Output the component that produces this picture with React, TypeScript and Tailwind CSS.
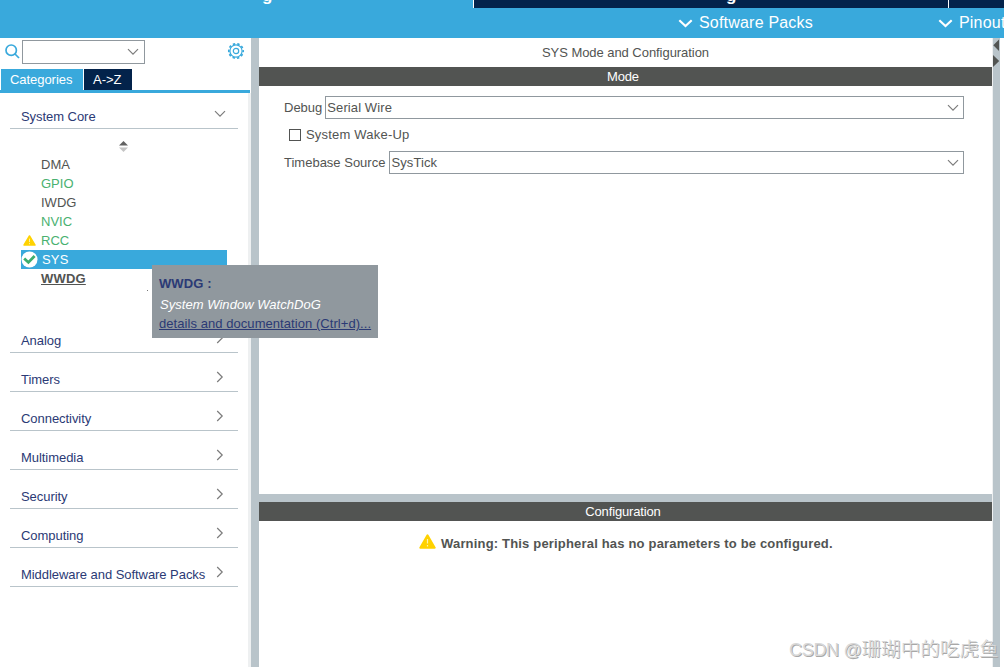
import React from "react";

function Chevron({ dir = "down", className = "" }: { dir?: "down" | "right"; className?: string }) {
  return dir === "down" ? (
    <svg className={className} width="12" height="8" viewBox="0 0 12 8" fill="none" stroke="#7c7c7c" strokeWidth="1.2">
      <path d="M1 1.2 L6 6.2 L11 1.2" />
    </svg>
  ) : (
    <svg className={className} width="8" height="12" viewBox="0 0 8 12" fill="none" stroke="#7c7c7c" strokeWidth="1.2">
      <path d="M1.2 1 L6.2 6 L1.2 11" />
    </svg>
  );
}

function WarningIcon({ width, height }: { width: number; height: number }) {
  return (
    <svg width={width} height={height} viewBox="0 0 17 15" preserveAspectRatio="none">
      <path d="M8.5 1.3 L15.7 13.7 H1.3 Z" fill="#ffd200" stroke="#ffd200" strokeWidth="2" strokeLinejoin="round" />
      <path d="M8.5 5 V9.6 M8.5 11 V12.6" stroke="#fff3b0" strokeWidth="1.2" />
    </svg>
  );
}

function GearIcon() {
  return (
    <svg width="18" height="18" viewBox="0 0 18 18" fill="none" stroke="#39a9dc">
      <circle cx="9" cy="9" r="7.2" strokeWidth="1.7" strokeDasharray="2.4 2.124" strokeDashoffset="1.2" />
      <circle cx="9" cy="9" r="6.1" strokeWidth="1.2" />
      <circle cx="9" cy="9" r="2.7" strokeWidth="1.2" />
    </svg>
  );
}

function CheckIcon() {
  return (
    <svg width="17" height="17" viewBox="0 0 17 17">
      <circle cx="8.5" cy="8.5" r="8" fill="#fff" />
      <path d="M3.2 7.4 L7.4 11.4 L13.6 5" fill="none" stroke="#3cae6e" strokeWidth="2.8" />
    </svg>
  );
}

const peripherals = [
  { name: "DMA", style: "text-[#525452]" },
  { name: "GPIO", style: "text-[#49b170]" },
  { name: "IWDG", style: "text-[#525452]" },
  { name: "NVIC", style: "text-[#49b170]" },
  { name: "RCC", style: "text-[#49b170]", icon: "warning" },
  { name: "SYS", style: "text-white tracking-[0.2px]", icon: "check", selected: true },
  { name: "WWDG", style: "text-[#525452] font-bold underline tracking-[0.2px]" },
];

const groups = ["Analog", "Timers", "Connectivity", "Multimedia", "Security", "Computing", "Middleware and Software Packs"];

function Section({ title, dir }: { title: string; dir: "down" | "right" }) {
  const size = dir === "down" ? "h-9 pt-[15px]" : "h-[39px] pt-[18px]";
  return (
    <div className={`mx-[10px] flex w-[228px] shrink-0 items-start justify-between border-b border-[#b9c4ca] pl-[11px] text-[#2b3a75] ${size}`}>
      <span className="whitespace-nowrap leading-[17px] tracking-[-0.05px]">{title}</span>
      <Chevron dir={dir} className={dir === "down" ? "mr-3 mt-[2px]" : "mr-[14px]"} />
    </div>
  );
}

function Select({ value }: { value: string }) {
  return (
    <div className="flex h-[23px] flex-1 items-center justify-between border border-[#90989e] pl-px pr-[4px]">
      <span className="tracking-[0.1px]">{value}</span>
      <Chevron />
    </div>
  );
}

function Bar({ children }: { children: React.ReactNode }) {
  return <div className="h-[19px] shrink-0 bg-[#525452] pr-[5px] text-center leading-[19px] tracking-[-0.15px] text-white">{children}</div>;
}

function HeaderMenu({ label }: { label: string }) {
  return (
    <div className="flex items-center gap-[6px] whitespace-nowrap text-[16px] tracking-[0.2px] text-white">
      <svg width="15" height="9" viewBox="0 0 15 9" fill="none" stroke="white" strokeWidth="2.2">
        <path d="M1.3 1.3 L7.5 7 L13.7 1.3" />
      </svg>
      <span>{label}</span>
    </div>
  );
}

export default function App() {
  return (
    <div className="relative flex h-[667px] w-[1004px] flex-col overflow-hidden bg-white font-['Liberation_Sans',Arial,sans-serif] text-[13px]">
      <div className="flex h-2 shrink-0 gap-px overflow-hidden bg-white text-[17px] font-bold leading-[18px] text-white">
        <div className="flex w-[473px] items-end bg-[#39a9dc] pl-[262px]"><span className="mb-[3px]">g</span></div>
        <div className="flex w-[474px] items-end bg-[#03234b] pl-[252px]"><span className="mb-[3px]">g</span></div>
        <div className="flex-1 bg-[#03234b]" />
      </div>
      <div className="flex h-[30px] shrink-0 gap-[125px] overflow-hidden bg-[#39a9dc] pl-[678px]">
        <HeaderMenu label="Software Packs" />
        <HeaderMenu label="Pinout" />
      </div>

      <div className="flex min-h-0 flex-1">
        <aside className="flex w-[251px] shrink-0 flex-col">
          <div className="flex h-[31px] items-start pt-[2px]">
            <svg className="ml-[5px] mt-[4px]" width="15" height="15" viewBox="0 0 15 15" fill="none" stroke="#39a9dc" strokeWidth="1.7">
              <circle cx="6.2" cy="6.2" r="5.2" />
              <path d="M10 10 L14 14" />
            </svg>
            <div className="ml-[2px] flex h-6 w-[123px] items-center justify-end border border-[#90989e] pr-[5px]">
              <Chevron />
            </div>
            <div className="ml-[82px] mt-[2px]"><GearIcon /></div>
          </div>
          <div className="flex h-[21px] gap-px pl-px leading-[21px] text-white">
            <div className="w-[82px] bg-[#39a9dc] pl-[9px] tracking-[-0.05px]">Categories</div>
            <div className="w-12 bg-[#03234b] pl-[9px]">A-&gt;Z</div>
          </div>
          <div className="h-[3px] w-[250px] shrink-0 bg-[#39a9dc]" />
          <div className="flex flex-1 flex-col border-r-[3px] border-[#eef0f1]">
            <Section title="System Core" dir="down" />
            <svg className="ml-[119px] mt-[12px] shrink-0" width="9" height="11" viewBox="0 0 9 11">
              <path d="M4.5 0 L9 4.5 H0 Z" fill="#626262" />
              <path d="M4.5 11 L9 6.5 H0 Z" fill="#c4c4c4" />
            </svg>
            <div className="ml-[21px] mt-[3px] w-[206px]">
              {peripherals.map((p) => (
                <div key={p.name} className={`flex h-[19px] items-center ${p.selected ? "bg-[#39a9dc]" : ""}`}>
                  <div className={`flex shrink-0 items-center ${p.selected ? "w-[21px]" : "w-5"}`}>
                    {p.icon === "warning" && <span className="pl-[2px]"><WarningIcon width={13} height={11} /></span>}
                    {p.icon === "check" && <CheckIcon />}
                  </div>
                  <span className={p.style}>{p.name}</span>
                </div>
              ))}
            </div>
            <div className="h-[26px] shrink-0 pt-[2px]"><div className="ml-[147px] size-px bg-[#777]" /></div>
            {groups.map((g) => <Section key={g} title={g} dir="right" />)}
          </div>
        </aside>
        <div className="w-2 shrink-0 bg-[#b9c4ca]" />

        <main className="flex w-[733px] shrink-0 flex-col text-[#525452]">
          <div className="h-[29px] shrink-0 text-center leading-[29px] tracking-[-0.05px]">SYS Mode and Configuration</div>
          <Bar>Mode</Bar>
          <div className="flex h-[408px] shrink-0 flex-col pl-[25px] pr-7 pt-[10px]">
            <div className="flex items-center gap-[3px]">
              <span>Debug</span>
              <Select value="Serial Wire" />
            </div>
            <div className="flex h-8 items-center gap-[5px] pl-[5px]">
              <span className="size-3 border border-[#525452]" />
              <span className="tracking-[0.2px]">System Wake-Up</span>
            </div>
            <div className="flex items-center gap-[4px]">
              <span>Timebase Source</span>
              <Select value="SysTick" />
            </div>
          </div>
          <div className="h-2 shrink-0 bg-[#b9c4ca]" />
          <Bar>Configuration</Bar>
          <div className="flex items-start pl-[160px] pt-[13px]">
            <WarningIcon width={17} height={15} />
            <span className="ml-[5px] font-bold tracking-[0.18px]">Warning: This peripheral has no parameters to be configured.</span>
          </div>
        </main>
        <div className="w-px bg-[#eef0f1]" />
        <div className="w-[7px] bg-[#b9c4ca]">
          <svg width="7" height="30" viewBox="0 0 7 30" fill="#525452">
            <path d="M6 1.5 V13 L0.3 7.2 Z M0 17 V29 L6.2 23 Z" />
          </svg>
        </div>
      </div>

      <div className="absolute left-[152px] top-[265px] h-[73px] w-[226px] whitespace-nowrap bg-[#90989e] pl-[7px] pt-[9px] text-[#2b3a75]">
        <div className="h-[21px] leading-[19px] tracking-[0.1px] font-bold">WWDG :</div>
        <div className="h-[19px] pl-px italic leading-[19px] tracking-[0.04px] text-white">System Window WatchDoG</div>
        <div className="leading-[19px] tracking-[0.06px] underline">details and documentation (Ctrl+d)...</div>
      </div>
      <div className="absolute left-[789px] top-[636px] whitespace-nowrap font-['Liberation_Sans','Noto_Sans_CJK_SC',sans-serif] text-[18px] leading-[26px] text-[#d8d8d8] [text-shadow:1px_1px_0_#a8a8a8]">
        <span className="tracking-[-0.3px]">CSDN @</span><span className="font-light text-[19.6px]">珊瑚中的吃虎鱼</span>
      </div>
    </div>
  );
}
